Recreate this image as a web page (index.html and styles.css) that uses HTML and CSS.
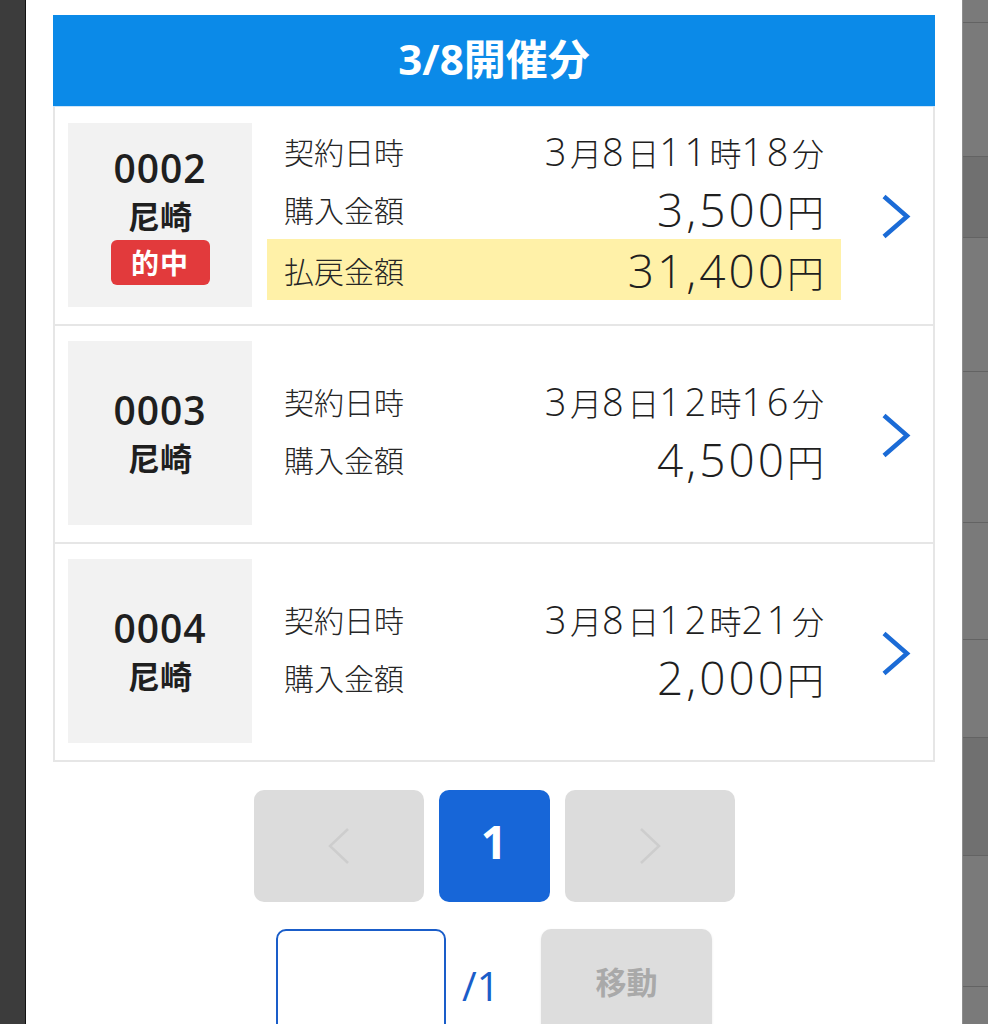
FILE: index.html
```html
<!DOCTYPE html>
<html lang="ja">
<head>
<meta charset="utf-8">
<title>購入履歴</title>
<link rel="stylesheet" href="styles.css">
</head>
<body>
<div class="screen">
  <div class="backdrop-left"></div>
  <main class="modal">
    <h2 class="day-header">3/8開催分</h2>
    <ul class="tickets">
      <li class="ticket">
        <div class="ticket-id">
          <span class="ticket-no">0002</span>
          <span class="ticket-place">尼崎</span>
          <span class="ticket-hit">的中</span>
        </div>
        <dl class="ticket-info">
          <div class="info-row"><dt>契約日時</dt><dd class="date"><span class="d">3</span>月<span class="d">8</span>日<span class="d">11</span>時<span class="d">18</span>分</dd></div>
          <div class="info-row"><dt>購入金額</dt><dd class="amount"><span class="d">3,500</span>円</dd></div>
          <div class="info-row payout"><dt>払戻金額</dt><dd class="amount"><span class="d">31,400</span>円</dd></div>
        </dl>
        <div class="ticket-arrow"><svg width="30" height="45" viewBox="0 0 30 45"><polyline points="3,2.5 26,22.5 3,42.5"/></svg></div>
      </li>
      <li class="ticket">
        <div class="ticket-id">
          <span class="ticket-no">0003</span>
          <span class="ticket-place">尼崎</span>
        </div>
        <dl class="ticket-info">
          <div class="info-row"><dt>契約日時</dt><dd class="date"><span class="d">3</span>月<span class="d">8</span>日<span class="d">12</span>時<span class="d">16</span>分</dd></div>
          <div class="info-row"><dt>購入金額</dt><dd class="amount"><span class="d">4,500</span>円</dd></div>
        </dl>
        <div class="ticket-arrow"><svg width="30" height="45" viewBox="0 0 30 45"><polyline points="3,2.5 26,22.5 3,42.5"/></svg></div>
      </li>
      <li class="ticket">
        <div class="ticket-id">
          <span class="ticket-no">0004</span>
          <span class="ticket-place">尼崎</span>
        </div>
        <dl class="ticket-info">
          <div class="info-row"><dt>契約日時</dt><dd class="date"><span class="d">3</span>月<span class="d">8</span>日<span class="d">12</span>時<span class="d">21</span>分</dd></div>
          <div class="info-row"><dt>購入金額</dt><dd class="amount"><span class="d">2,000</span>円</dd></div>
        </dl>
        <div class="ticket-arrow"><svg width="30" height="45" viewBox="0 0 30 45"><polyline points="3,2.5 26,22.5 3,42.5"/></svg></div>
      </li>
    </ul>
    <nav class="pager">
      <button class="pg pg-side" type="button" aria-label="前へ"><svg width="24" height="38" viewBox="0 0 24 38"><polyline points="21,2 3,19 21,36"/></svg></button>
      <button class="pg pg-current" type="button">1</button>
      <button class="pg pg-side" type="button" aria-label="次へ"><svg width="24" height="38" viewBox="0 0 24 38"><polyline points="3,2 21,19 3,36"/></svg></button>
    </nav>
    <div class="jump">
      <input class="jump-input" type="text" aria-label="ページ">
      <span class="jump-total">/1</span>
      <button class="jump-btn" type="button">移動</button>
    </div>
  </main>
  <div class="backdrop-right">
    <div class="bg-row h23"></div>
    <div class="bg-row h134"></div>
    <div class="bg-row h81 dark"></div>
    <div class="bg-row h134"></div>
    <div class="bg-row h151"></div>
    <div class="bg-row h117"></div>
    <div class="bg-row h98"></div>
    <div class="bg-row h118 dark"></div>
    <div class="bg-row h131"></div>
  </div>
</div>
</body>
</html>
```

FILE: styles.css
```css
* { box-sizing: border-box; }
html, body { margin: 0; padding: 0; }
body {
  width: 988px;
  height: 1024px;
  overflow: hidden;
  background: #fff;
  color: #1f1f1f;
  font-family: "Open Sans", "Noto Sans CJK JP", sans-serif;
}
.screen { display: flex; height: 1024px; }

.backdrop-left {
  flex: none;
  width: 26px;
  background: #3c3c3c;
  border-right: 1px solid #121212;
}
.backdrop-right {
  flex: 1;
  display: flex;
  flex-direction: column;
  background: #7a7a7a;
  border-left: 1px solid #8e8e8e;
}
.bg-row { flex: none; border-bottom: 1px solid #636363; }
.bg-row.dark { background: #707070; }
.h23 { height: 23px; }
.h134 { height: 134px; }
.h81 { height: 81px; }
.h151 { height: 151px; }
.h117 { height: 117px; }
.h98 { height: 98px; }
.h118 { height: 118px; }
.h131 { height: 131px; }

.modal {
  flex: none;
  width: 936px;
  background: #fff;
  padding: 15px 27px 0 27px;
}

.day-header {
  margin: 0;
  height: 92px;
  background: #0b8ae8;
  border-bottom: 1px solid #cfe5f8;
  color: #fff;
  text-align: center;
  font-family: "Open Sans", "Noto Sans CJK JP", sans-serif;
  font-weight: 700;
  font-size: 42px;
  line-height: 88px;
}

.tickets {
  list-style: none;
  margin: 0;
  padding: 0;
  border-left: 2px solid #e6e6e6;
  border-right: 2px solid #e6e6e6;
}
.ticket {
  display: flex;
  align-items: center;
  padding: 15px 0 17px 13px;
  border-bottom: 2px solid #e6e6e6;
}

.ticket-id {
  flex: none;
  width: 184px;
  height: 184px;
  background: #f2f2f2;
  display: flex;
  flex-direction: column;
  align-items: center;
  justify-content: center;
  color: #1f1f1f;
}
.ticket-no {
  font-family: "Open Sans", sans-serif;
  font-weight: 600;
  font-size: 39px;
  line-height: 48px;
  letter-spacing: 1px;
}
.ticket-place {
  font-family: "Noto Sans CJK JP", sans-serif;
  font-weight: 700;
  font-size: 32px;
  line-height: 46px;
}
.ticket-hit {
  margin-top: 2px;
  width: 99px;
  height: 45px;
  border-radius: 6px;
  background: #e23a3c;
  color: #fff;
  text-align: center;
  font-family: "Noto Sans CJK JP", sans-serif;
  font-weight: 700;
  font-size: 28px;
  line-height: 45px;
  letter-spacing: 1px;
}

.ticket-info {
  flex: none;
  width: 574px;
  margin: 0 0 7px 15px;
}
.info-row {
  display: flex;
  justify-content: space-between;
  align-items: center;
  height: 58px;
  padding: 0 17px;
}
.info-row.payout {
  height: 61px;
  margin-top: 1px;
  background: #fff1a8;
}
.info-row dt {
  font-family: "Noto Sans CJK JP", sans-serif;
  font-weight: 300;
  font-size: 30px;
  line-height: 1;
  color: #262626;
}
.info-row dd {
  margin: 0;
  white-space: nowrap;
  line-height: 1;
  color: #1f1f1f;
  font-weight: 300;
  font-family: "Open Sans", "Noto Sans CJK JP", sans-serif;
}
.date { font-size: 32px; }
.date .d { font-size: 38px; letter-spacing: 3.5px; }
.amount { font-size: 37px; }
.amount .d { font-size: 46px; letter-spacing: 3px; }

.ticket-arrow {
  flex: 1;
  display: flex;
  align-items: center;
  padding: 4px 0 0 40px;
}
.ticket-arrow polyline {
  fill: none;
  stroke: #1b6bd6;
  stroke-width: 4.5;
}

.pager {
  display: flex;
  justify-content: center;
  gap: 15px;
  margin-top: 28px;
}
.pg {
  height: 112px;
  border: none;
  border-radius: 10px;
  padding: 0;
  display: flex;
  align-items: center;
  justify-content: center;
}
.pg-side { width: 170px; background: #dcdcdc; }
.pg-side polyline { fill: none; stroke: #cdcdcd; stroke-width: 2.5; }
.pg-current {
  width: 111px;
  padding-bottom: 11px;
  background: #1766d8;
  color: #fff;
  font-family: "Open Sans", sans-serif;
  font-weight: 700;
  font-size: 46px;
}

.jump {
  display: flex;
  justify-content: center;
  align-items: center;
  margin-top: 27px;
}
.jump-input {
  width: 170px;
  height: 112px;
  border: 2px solid #1a5dc9;
  border-radius: 10px;
  background: #fff;
  outline: none;
}
.jump-total {
  width: 95px;
  padding-left: 16px;
  color: #1a5dc9;
  font-family: "Open Sans", sans-serif;
  font-size: 40px;
}
.jump-btn {
  width: 171px;
  height: 112px;
  padding: 0 0 10px;
  border: none;
  border-radius: 10px;
  background: #dddddd;
  color: #a9a9a9;
  font-family: "Noto Sans CJK JP", sans-serif;
  font-weight: 700;
  font-size: 31px;
  box-shadow: 0 1px 3px rgba(0, 0, 0, 0.08);
}
```
